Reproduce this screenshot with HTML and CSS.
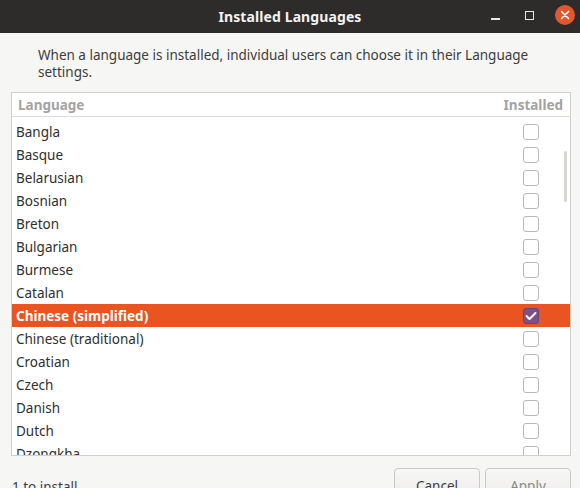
FILE: index.html
```html
<!DOCTYPE html>
<html>
<head>
<meta charset="utf-8">
<link rel="stylesheet" href="styles.css">
</head>
<body>
<div class="window">
  <div class="titlebar">
    <div class="title">Installed Languages</div>
    <div class="controls">
      <span class="ctl min"></span>
      <span class="ctl max"></span>
      <span class="ctl close">
        <svg width="20" height="20" viewBox="0 0 20 20"><circle cx="10" cy="10" r="10" fill="#e2572c"/><path d="M6.5 6.5 L13.5 13.5 M13.5 6.5 L6.5 13.5" stroke="#fff" stroke-width="1.6" stroke-linecap="round"/></svg>
      </span>
    </div>
  </div>
  <div class="content">
    <p class="desc">When a language is installed, individual users can choose it in their Language settings.</p>
    <div class="listbox">
      <div class="header">
        <span class="hcol">Language</span>
        <span class="hcol">Installed</span>
      </div>
      <div class="rows">
        <div class="row"><span>Bangla</span><span class="cb"></span></div>
        <div class="row"><span>Basque</span><span class="cb"></span></div>
        <div class="row"><span>Belarusian</span><span class="cb"></span></div>
        <div class="row"><span>Bosnian</span><span class="cb"></span></div>
        <div class="row"><span>Breton</span><span class="cb"></span></div>
        <div class="row"><span>Bulgarian</span><span class="cb"></span></div>
        <div class="row"><span>Burmese</span><span class="cb"></span></div>
        <div class="row"><span>Catalan</span><span class="cb"></span></div>
        <div class="row selected"><span>Chinese (simplified)</span><span class="cb checked"><svg width="12" height="10" viewBox="0 0 12 10"><path d="M1.5 5 L4.5 8 L10.5 2" fill="none" stroke="#fff" stroke-width="2" stroke-linecap="round" stroke-linejoin="round"/></svg></span></div>
        <div class="row"><span>Chinese (traditional)</span><span class="cb"></span></div>
        <div class="row"><span>Croatian</span><span class="cb"></span></div>
        <div class="row"><span>Czech</span><span class="cb"></span></div>
        <div class="row"><span>Danish</span><span class="cb"></span></div>
        <div class="row"><span>Dutch</span><span class="cb"></span></div>
        <div class="row"><span>Dzongkha</span><span class="cb"></span></div>
      </div>
      <div class="scrollbar"></div>
    </div>
    <div class="footer">
      <span class="status">1 to install</span>
      <div class="buttons">
        <span class="btn">Cancel</span>
        <span class="btn apply">Apply</span>
      </div>
    </div>
  </div>
</div>
</body>
</html>
```
FILE: styles.css
```css
html, body {
  margin: 0;
  padding: 0;
}
body {
  width: 580px;
  height: 488px;
  overflow: hidden;
  background: #f6f6f5;
  font-family: "Noto Sans", "Open Sans", sans-serif;
  color: #3d3d3d;
}
.window {
  display: flex;
  flex-direction: column;
  height: 488px;
}
.titlebar {
  height: 33px;
  background: #2d2c2b;
  display: flex;
  align-items: center;
  justify-content: center;
  position: relative;
  flex: none;
}
.title {
  color: #f2f2f2;
  font-weight: bold;
  font-size: 14px;
  letter-spacing: 0.1px;
}
.controls {
  position: absolute;
  right: 5px;
  top: 5px;
  display: flex;
  align-items: center;
  gap: 0;
}
.ctl {
  display: block;
}
.min {
  width: 9px;
  height: 2px;
  background: #e8e8e8;
  margin-top: 7px;
  margin-right: 25px;
}
.max {
  width: 7px;
  height: 7px;
  border: 1.5px solid #e8e8e8;
  margin-right: 21px;
}
.close {
  width: 20px;
  height: 20px;
}
.close svg { display: block; }
.content {
  flex: 1;
  display: flex;
  flex-direction: column;
  padding: 0 9px 0 11px;
}
.desc {
  margin: 14px 0 0 27px;
  font-size: 13.5px;
  line-height: 17px;
  width: 520px;
  color: #3d3d3d;
}
.listbox {
  margin-top: 11px;
  height: 362px;
  border: 1px solid #cfcfcd;
  background: #ffffff;
  position: relative;
  overflow: hidden;
  flex: none;
}
.header {
  height: 23px;
  display: flex;
  justify-content: space-between;
  align-items: center;
  padding: 0 7px 0 6px;
  border-bottom: 1px solid #dcdcdb;
}
.hcol {
  font-weight: bold;
  color: #a3a3a3;
  font-size: 13.5px;
}
.rows {
  padding-top: 3px;
}
.row {
  height: 23px;
  display: flex;
  justify-content: space-between;
  align-items: center;
  padding: 0 31px 0 4px;
  font-size: 13.5px;
  color: #2f2f2f;
}
.row.selected {
  background: #e95420;
  color: #ffffff;
  font-weight: bold;
}
.cb {
  width: 14px;
  height: 14px;
  border: 1px solid #b9b9b7;
  border-radius: 3px;
  background: #fff;
  display: flex;
  align-items: center;
  justify-content: center;
}
.cb.checked {
  background: #7e5087;
  border-color: #6a4373;
}
.cb svg { display: block; }
.scrollbar {
  position: absolute;
  right: 3px;
  top: 58px;
  width: 3px;
  height: 51px;
  background: #d6d6d5;
  border-radius: 2px;
}
.footer {
  display: flex;
  justify-content: space-between;
  align-items: flex-start;
  margin-top: 12px;
}
.status {
  margin-top: 10px;
  margin-left: 1px;
  font-size: 13.5px;
  color: #3d3d3d;
}
.buttons {
  display: flex;
  gap: 5px;
}
.btn {
  display: block;
  width: 84px;
  height: 30px;
  border: 1px solid #c9c9c7;
  border-radius: 4px;
  background: linear-gradient(#f7f7f6, #edecea);
  text-align: center;
  font-size: 13.5px;
  line-height: 34px;
  color: #3d3d3d;
}
.btn.apply {
  color: #8a8a8a;
}
```
